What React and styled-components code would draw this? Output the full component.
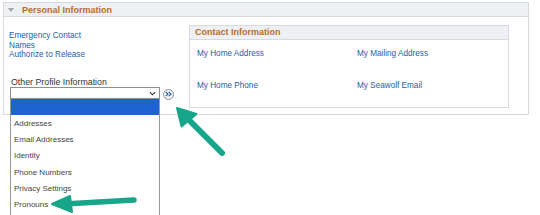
import React from 'react';
import styled, { createGlobalStyle } from 'styled-components';

const GlobalStyle = createGlobalStyle`
  html, body {
    margin: 0;
    padding: 0;
    background: #ffffff;
    font-family: "Liberation Sans", Arial, sans-serif;
  }
`;

const profileOptions = [
  '',
  'Addresses',
  'Email Addresses',
  'Identity',
  'Phone Numbers',
  'Privacy Settings',
  'Pronouns',
];

const contactLinks = [
  'My Home Address',
  'My Mailing Address',
  'My Home Phone',
  'My Seawolf Email',
];

const Page = () => {
  return (
    <Screen>
      <GlobalStyle />
      <Panel>
        <PanelHeader>
          <Collapse />
          <HeaderTitle>Personal Information</HeaderTitle>
        </PanelHeader>
        <PanelBody>
          <LeftColumn>
            <LinkList>
              <LinkItem>Emergency Contact</LinkItem>
              <LinkItem>Names</LinkItem>
              <LinkItem>Authorize to Release</LinkItem>
            </LinkList>
            <FieldLabel>Other Profile Information</FieldLabel>
            <SelectRow>
              <SelectBox>
                <Chevron viewBox="0 0 8 5">
                  <path d="M1 1 L4 4 L7 1" fill="none" stroke="#333" strokeWidth="1.3" />
                </Chevron>
                <OptionList>
                  {profileOptions.map((opt, i) => (
                    <OptionItem key={i} $selected={i === 0}>{opt}</OptionItem>
                  ))}
                </OptionList>
              </SelectBox>
              <GoButton>
                <svg width="7" height="6" viewBox="0 0 7 6">
                  <path d="M0.8 0.8 L2.9 3 L0.8 5.2 M3.8 0.8 L5.9 3 L3.8 5.2" fill="none" stroke="#2a5ea8" strokeWidth="1.2" />
                </svg>
              </GoButton>
            </SelectRow>
          </LeftColumn>
          <ContactBox>
            <ContactHeader>Contact Information</ContactHeader>
            <ContactGrid>
              {contactLinks.map(l => <LinkItem key={l}>{l}</LinkItem>)}
            </ContactGrid>
          </ContactBox>
        </PanelBody>
      </Panel>
      <Callouts width="540" height="215" viewBox="0 0 540 215">
        <g fill="#17a689" stroke="#17a689" strokeLinecap="round" strokeLinejoin="round">
          <line x1="222" y1="153" x2="186" y2="117" strokeWidth="6" />
          <polygon points="177,108 181.5,126.5 196.5,114" strokeWidth="2" />
          <line x1="134" y1="200" x2="64" y2="204" strokeWidth="5.5" />
          <polygon points="52,204 70,196 72,212" strokeWidth="2" />
        </g>
      </Callouts>
    </Screen>
  );
};

const Screen = styled.div`
  position: relative;
  width: 540px;
  height: 215px;
  overflow: hidden;
  padding: 2px 0 0 3px;
  box-sizing: border-box;
`;

const Panel = styled.div`
  width: 526px;
  height: 113px;
  border: 1px solid #d7dbe0;
  box-sizing: border-box;
`;

const PanelHeader = styled.div`
  height: 14px;
  background: #eef0f3;
  border-bottom: 1px solid #d7dbe0;
  box-sizing: border-box;
  display: flex;
  align-items: center;
  padding-left: 4px;
  gap: 8px;
`;

const Collapse = styled.span`
  width: 0;
  height: 0;
  border-left: 3.5px solid transparent;
  border-right: 3.5px solid transparent;
  border-top: 4px solid #a3a8ad;
  margin-top: 1px;
`;

const HeaderTitle = styled.span`
  font-size: 9px;
  font-weight: bold;
  color: #b86d27;
  line-height: 12px;
`;

const PanelBody = styled.div`
  display: flex;
`;

const LeftColumn = styled.div`
  width: 185px;
  padding: 14px 0 0 5px;
  box-sizing: border-box;
  display: flex;
  flex-direction: column;
`;

const LinkList = styled.div`
  display: flex;
  flex-direction: column;
`;

const LinkItem = styled.span`
  font-size: 8.2px;
  line-height: 9.5px;
  color: #2660a9;
  white-space: nowrap;
  cursor: pointer;
`;

const FieldLabel = styled.div`
  margin: 17px 0 0 2px;
  font-size: 8.8px;
  line-height: 10px;
  color: #333333;
  white-space: nowrap;
`;

const SelectRow = styled.div`
  display: flex;
  align-items: center;
  margin: 0 0 0 1px;
  gap: 3px;
`;

const SelectBox = styled.div`
  position: relative;
  width: 150px;
  height: 12px;
  border: 1px solid #8f8f8f;
  box-sizing: border-box;
  background: #ffffff;
`;

const Chevron = styled.svg`
  position: absolute;
  right: 3px;
  top: 3px;
  width: 7px;
  height: 5px;
`;

const OptionList = styled.div`
  position: absolute;
  left: -1px;
  top: 11px;
  width: 150px;
  padding-bottom: 12px;
  border-left: 1px solid #9a9a9a;
  border-right: 1px solid #9a9a9a;
  box-sizing: border-box;
  background: #ffffff;
  z-index: 2;
`;

const OptionItem = styled.div`
  height: ${p => (p.$selected ? '16px' : '16.2px')};
  padding-top: ${p => (p.$selected ? '0' : '1px')};
  box-sizing: border-box;
  line-height: 16px;
  padding-left: 3px;
  font-size: 8px;
  color: #444444;
  background: ${p => (p.$selected ? '#1d64d2' : 'transparent')};
  white-space: nowrap;
`;

const GoButton = styled.span`
  width: 11px;
  height: 11px;
  margin-top: 2px;
  border: 1px solid #8d939b;
  border-radius: 50%;
  box-sizing: border-box;
  background: #f4f6f9;
  display: flex;
  align-items: center;
  justify-content: center;
`;

const ContactBox = styled.div`
  width: 320px;
  height: 83px;
  margin-top: 8px;
  border: 1px solid #d7dbe0;
  box-sizing: border-box;
`;

const ContactHeader = styled.div`
  height: 14px;
  background: #eef0f3;
  border-bottom: 1px solid #d7dbe0;
  box-sizing: border-box;
  padding-left: 5px;
  font-size: 9px;
  font-weight: bold;
  line-height: 12px;
  color: #b86d27;
`;

const ContactGrid = styled.div`
  display: grid;
  grid-template-columns: 160px 1fr;
  row-gap: 22.8px;
  padding: 9px 0 0 7px;
`;

const Callouts = styled.svg`
  position: absolute;
  left: 0;
  top: 0;
  pointer-events: none;
  z-index: 5;
`;

export default Page;
